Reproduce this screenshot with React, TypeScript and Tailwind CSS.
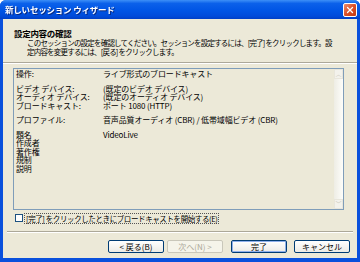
import { X } from 'lucide-react';

const rows: { label: string; value?: string; gap?: boolean }[] = [
  { label: '操作:', value: 'ライブ形式のブロードキャスト' },
  { label: 'ビデオ デバイス:', value: '(既定のビデオ デバイス)', gap: true },
  { label: 'オーディオ デバイス:', value: '(既定のオーディオ デバイス)' },
  { label: 'ブロードキャスト:', value: 'ポート 1080 (HTTP)' },
  { label: 'プロファイル:', value: '音声品質オーディオ (CBR) / 低帯域幅ビデオ (CBR)', gap: true },
  { label: '題名', value: 'VideoLive', gap: true },
  { label: '作成者' },
  { label: '著作権' },
  { label: '規制' },
  { label: '説明' },
];

const XpButton = ({ label, disabled, primary }: { label: string; disabled?: boolean; primary?: boolean }) => (
  <button
    className={`w-[56px] h-[13px] rounded-[2px] border text-[8px] leading-none flex items-center justify-center ${
      disabled
        ? 'border-[#c9c7ba] bg-[#f5f4ea] text-[#aca899]'
        : primary
          ? 'border-[#003c74] bg-gradient-to-b from-white to-[#ecebe6] text-black shadow-[inset_0_0_0_1px_#8fb0ec]'
          : 'border-[#003c74] bg-gradient-to-b from-white to-[#ecebe6] text-black'
    }`}
  >
    {label}
  </button>
);

export default function App() {
  return (
    <div className="w-[360px] h-[262px] flex flex-col bg-[#0a50dc] rounded-t-[6px] overflow-hidden font-['Noto_Sans_CJK_JP',sans-serif]">
      {/* Title bar */}
      <div className="h-[19px] shrink-0 flex items-center justify-between pl-[5px] pr-[3px] bg-[linear-gradient(to_bottom,#3d8ff7_0%,#0b61ea_18%,#0055e5_55%,#004bda_85%,#003fc6_100%)]">
        <span className="text-white font-bold text-[8.5px] tracking-[-0.2px] whitespace-pre drop-shadow-[1px_1px_0_#0a2a80]">新しいセッション ウィザード</span>
        <div className="w-[14px] h-[14px] rounded-[2px] border border-white bg-gradient-to-br from-[#e98c6c] via-[#dd4f27] to-[#c23a12] flex items-center justify-center">
          <X className="w-[10px] h-[10px] text-white" strokeWidth={3} />
        </div>
      </div>

      {/* Body */}
      <div className="flex-1 mx-[3px] mb-[4px] bg-[#ece9d8] flex flex-col text-black">
        {/* Header */}
        <div className="h-[42.5px] pt-[9px] pl-[11px]">
          <div className="font-bold text-[8.5px] leading-[10px] tracking-[-0.3px]">設定内容の確認</div>
          <div className="pl-[13px] text-[7.5px] leading-[9px] tracking-[-0.8px] whitespace-nowrap">
            <div>このセッションの設定を確認してください。セッションを設定するには、[完了] をクリックします。設</div>
            <div>定内容を変更するには、[戻る] をクリックします。</div>
          </div>
        </div>
        <div className="h-[2px] border-t border-[#aca899] border-b border-b-white" />

        {/* Summary box */}
        <div className="mt-[4.5px] ml-[10px] mr-[13px] h-[142px] border border-[#7f9db9] flex">
          <div className="flex-1 pl-[2px] pt-[1px] text-[8px] leading-[8.5px] tracking-[-0.15px]">
            {rows.map((r) => (
              <div key={r.label} className={`flex whitespace-nowrap ${r.gap ? 'mt-[6px]' : ''}`}>
                <span className="w-[87px]">{r.label}</span>
                {r.value && <span>{r.value}</span>}
              </div>
            ))}
          </div>
          <div className="w-[9px] flex flex-col bg-gradient-to-r from-[#eeede5] to-[#fdfdfa]">
            <div className="h-[10px] border border-[#e8e6dc] bg-[#f3f2ec] flex items-center justify-center text-[#c9c7ba] text-[6px] leading-none">︿</div>
            <div className="flex-1" />
            <div className="h-[10px] border border-[#e8e6dc] bg-[#f3f2ec] flex items-center justify-center text-[#c9c7ba] text-[6px] leading-none">﹀</div>
          </div>
        </div>

        {/* Checkbox */}
        <div className="mt-[3px] h-[10px] ml-[12px] flex items-center gap-[1px]">
          <div className="w-[8px] h-[8px] border border-[#1c5180] bg-white" />
          <span className="text-[7.5px] leading-[9px] tracking-[-0.4px] whitespace-nowrap border border-dotted border-[#555] px-[1px]">
            [完了] をクリックしたときにブロードキャストを開始する(E)
          </span>
        </div>

        <div className="mt-[8px] mx-[4px] h-[2px] border-t border-[#aca899] border-b border-b-white" />

        {/* Buttons */}
        <div className="mt-[7px] flex justify-end pr-[7px]">
          <XpButton label="< 戻る(B)" />
          <div className="w-[3px]" />
          <XpButton label="次へ(N) >" disabled />
          <div className="w-[8px]" />
          <XpButton label="完了" primary />
          <div className="w-[7px]" />
          <XpButton label="キャンセル" />
        </div>
      </div>
    </div>
  );
}
